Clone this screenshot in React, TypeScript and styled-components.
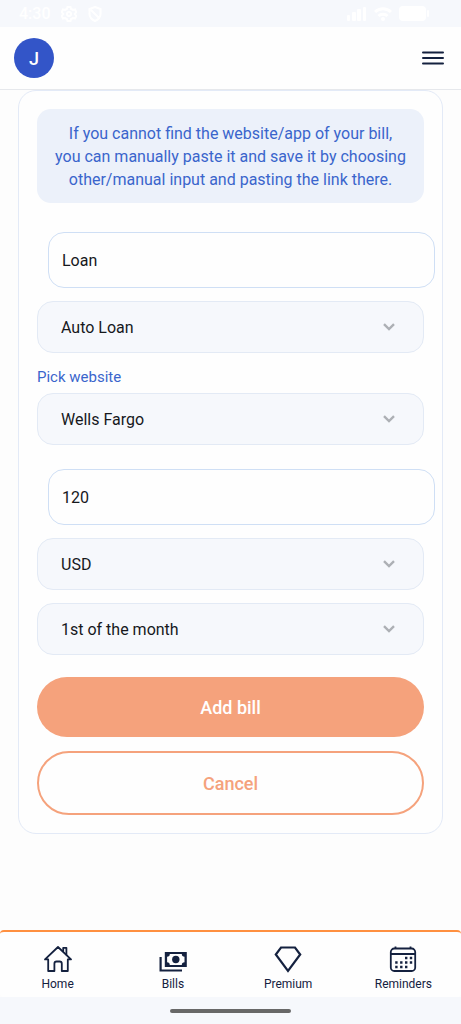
import React from "react";
import styled, { createGlobalStyle } from "styled-components";

const navy = "#14213f";
const blue = "#3a65cc";
const coral = "#f5a27c";

const GlobalStyle = createGlobalStyle`
  * { box-sizing: border-box; }
  body {
    margin: 0;
    background: #fdfdfd;
    font-family: Roboto, "Liberation Sans", sans-serif;
    color: #16181c;
  }
  button, input, select { font: inherit; color: inherit; }
`;

const Page = styled.div`
  min-height: 100vh;
  display: flex;
  flex-direction: column;
`;

const StatusBar = styled.div`
  height: 27px;
  padding: 0 32px 0 19px;
  display: flex;
  align-items: center;
  justify-content: space-between;
  background: #f6f8fc;
  color: #fff;
  font-size: 16px;
  font-weight: 500;
`;

const StatusGroup = styled.div<{ $gap: number }>`
  display: flex;
  align-items: center;
  gap: ${(p) => p.$gap}px;
`;

const Header = styled.header`
  height: 63px;
  padding: 0 17px 0 14px;
  display: flex;
  align-items: center;
  justify-content: space-between;
  background: #fefefe;
  border-bottom: 1px solid #e6e8ec;
`;

const Avatar = styled.button`
  width: 40px;
  height: 40px;
  padding: 0;
  border: 0;
  border-radius: 50%;
  background: #3355c8;
  color: #fff;
  font-size: 18px;
  font-weight: 500;
`;

const MenuButton = styled.button`
  padding: 0;
  border: 0;
  background: none;
  display: flex;
`;

const Main = styled.main`
  flex: 1;
  padding: 0 18px 24px;
`;

const Card = styled.form`
  display: flex;
  flex-direction: column;
  padding: 18px;
  border: 1px solid #e3eaf7;
  border-radius: 18px;
  background: #fefefe;
`;

const Notice = styled.p`
  margin: 0 0 29px;
  padding: 13px 12px 12px;
  border-radius: 14px;
  background: #ecf1fa;
  color: ${blue};
  font-size: 16px;
  line-height: 23px;
  text-align: center;
`;

const TextField = styled.input`
  height: 56px;
  margin: 0 -11px 13px 11px;
  padding: 0 13px;
  border: 1px solid #cfdff5;
  border-radius: 16px;
  background: #fefefe;
  font-size: 16px;
  outline: none;
`;

const SelectBox = styled.div<{ $after: number }>`
  position: relative;
  margin-bottom: ${(p) => p.$after}px;

  svg {
    position: absolute;
    right: 29px;
    top: 22px;
    pointer-events: none;
  }
`;

const Select = styled.select`
  display: block;
  width: 100%;
  height: 52px;
  padding: 0 56px 0 23px;
  appearance: none;
  border: 1px solid #e3eaf5;
  border-radius: 16px;
  background: #f6f8fc;
  font-size: 16px;
  outline: none;
`;

const FieldLabel = styled.label`
  padding: 1px 0 6px;
  color: ${blue};
  font-size: 15px;
  line-height: 20px;
`;

const ActionButton = styled.button<{ $outline?: boolean }>`
  height: ${(p) => (p.$outline ? 64 : 60)}px;
  border: ${(p) => (p.$outline ? `2px solid ${coral}` : "0")};
  border-radius: 32px;
  background: ${(p) => (p.$outline ? "#fefefe" : coral)};
  color: ${(p) => (p.$outline ? coral : "#fff")};
  font-size: 18px;
  font-weight: 500;

  & + & { margin-top: 14px; }
`;

const BottomNav = styled.nav`
  height: 67px;
  display: grid;
  grid-template-columns: repeat(4, 1fr);
  background: #fefefe;
  border-top: 2px solid #ff9040;
  border-radius: 4px;
`;

const NavLink = styled.a`
  display: flex;
  flex-direction: column;
  align-items: center;
  padding-top: 13px;
  gap: 3px;
  color: ${navy};
  font-size: 12px;
  line-height: 16px;
  text-decoration: none;
`;

const GestureArea = styled.div`
  height: 27px;
  display: flex;
  align-items: center;
  justify-content: center;
  background: #f6f8fc;
`;

const GestureHandle = styled.div`
  width: 121px;
  height: 4px;
  border-radius: 2px;
  background: #686868;
`;

function SelectField({ id, label, value, after = 13 }: { id: string; label?: string; value: string; after?: number }) {
  return (
    <SelectBox $after={after}>
      <Select id={id} aria-label={label} defaultValue={value}>
        <option>{value}</option>
      </Select>
      <svg width="12" height="8" viewBox="0 0 12 8" fill="none" stroke="#adb0b5" strokeWidth="2.4" aria-hidden="true">
        <path d="M1 1.200l5 4.800 5-4.800" />
      </svg>
    </SelectBox>
  );
}

const HomeIcon = () => (
  <svg width="28" height="28" viewBox="0 0 28 28" fill="none" stroke={navy} strokeWidth="1.800" strokeLinejoin="round" strokeLinecap="round" aria-hidden="true">
    <path d="M1 14.400L14 2l13 12.400h-3.200V26h-6v-7.200c0-1.500-.8-2.300-2.200-2.300h-3c-1.400 0-2.200.8-2.200 2.300V26H4.200V14.400z" />
    <path d="M19.200 6.200V2.800h3.200v6.800" />
  </svg>
);

const BillsIcon = () => (
  <svg width="28" height="28" viewBox="0 0 28 28" aria-hidden="true">
    <path d="M1.600 12v13.500h21.400" fill="none" stroke={navy} strokeWidth="2.200" />
    <path d="M5.800 7h22v15h-22z" fill={navy} />
    <path d="M10.800 9h12c0 1.700 1 2.700 2.700 2.700v5.500c-1.700 0-2.700 1-2.700 2.700h-12c0-1.700-1-2.700-2.700-2.700v-5.500c1.700 0 2.700-1 2.700-2.700z" fill="#fefefe" />
    <circle cx="16.800" cy="14.500" r="3.700" fill={navy} />
  </svg>
);

const PremiumIcon = () => (
  <svg width="28" height="28" viewBox="0 0 28 28" fill="none" stroke={navy} strokeWidth="2.200" aria-hidden="true">
    <path d="M7 2.500h14l5.200 7L14 25.800 1.800 9.500z" />
  </svg>
);

const RemindersIcon = () => (
  <svg width="28" height="28" viewBox="0 0 28 28" fill="none" stroke={navy} strokeWidth="1.800" aria-hidden="true">
    <rect x="1.800" y="3.500" width="24.400" height="22.500" rx="3.500" />
    <path d="M2 9h24M6.500 1.500v2M21.500 1.500v2" />
    <path d="M16 13h2.400M20.800 13h2.400M6.200 17.500h2.400M11.100 17.500h2.400M16 17.500h2.400M20.800 17.500h2.400M6.200 22h2.400M11.100 22h2.400M16 22h2.400" strokeWidth="2.400" />
  </svg>
);

const navItems = [
  { name: "Home", Icon: HomeIcon },
  { name: "Bills", Icon: BillsIcon },
  { name: "Premium", Icon: PremiumIcon },
  { name: "Reminders", Icon: RemindersIcon },
];

export default function App() {
  return (
    <Page>
      <GlobalStyle />
      <StatusBar>
        <StatusGroup $gap={10}>
          <span>4:30</span>
          <svg width="16" height="16" viewBox="0 0 16 16" fill="none" stroke="#fff" strokeWidth="2" aria-hidden="true">
            <path d="M6.500 1h3l.6 2 1.900 1 2-.5 1.300 2.600L13.800 8l1.500 1.900-1.300 2.600-2-.5-1.900 1-.6 2h-3l-.6-2-1.900-1-2 .5L.7 9.900 2.200 8 .7 6.100 2 3.500l2 .5 1.900-1z" />
            <circle cx="8" cy="8" r="2" />
          </svg>
          <svg width="16" height="16" viewBox="0 0 16 16" fill="none" stroke="#fff" strokeWidth="2" aria-hidden="true">
            <path d="M8 1l5.500 2v5c0 3-2.200 5.500-5.500 7-3.300-1.500-5.500-4-5.500-7V3zM4 4l8 8" />
          </svg>
        </StatusGroup>
        <StatusGroup $gap={7}>
          <svg width="20" height="14" viewBox="0 0 20 14" fill="#fff" aria-hidden="true">
            <rect x="0" y="8" width="3" height="6" rx="1" />
            <rect x="5" y="5" width="4" height="9" rx="1" />
            <rect x="10" y="2" width="4" height="12" rx="1" />
            <rect x="16" y="0" width="3" height="14" rx="1" />
          </svg>
          <svg width="18" height="14" viewBox="0 0 18 14" fill="none" stroke="#fff" strokeWidth="3" aria-hidden="true">
            <path d="M1 5c4.500-4.500 11.500-4.500 16 0M4.500 9c2.500-2.500 6.500-2.500 9 0" />
            <circle cx="9" cy="12" r="2" fill="#fff" stroke="none" />
          </svg>
          <svg width="30" height="15" viewBox="0 0 30 15" fill="#fff" aria-hidden="true">
            <rect width="27" height="15" rx="4" />
            <rect x="28" y="4" width="2" height="7" rx="1" />
          </svg>
        </StatusGroup>
      </StatusBar>

      <Header>
        <Avatar type="button">J</Avatar>
        <MenuButton type="button" aria-label="Menu">
          <svg width="22" height="16" viewBox="0 0 22 16" stroke={navy} strokeWidth="2" strokeLinecap="round" aria-hidden="true">
            <path d="M1 2.500h20M1 8h20M1 13.500h20" />
          </svg>
        </MenuButton>
      </Header>

      <Main>
        <Card onSubmit={(e) => e.preventDefault()}>
          <Notice>
            If you cannot find the website/app of your bill,
            <br />
            you can manually paste it and save it by choosing
            <br />
            other/manual input and pasting the link there.
          </Notice>
          <TextField aria-label="Bill name" defaultValue="Loan" />
          <SelectField id="category" label="Bill category" value="Auto Loan" />
          <FieldLabel htmlFor="website">Pick website</FieldLabel>
          <SelectField id="website" value="Wells Fargo" after={24} />
          <TextField aria-label="Amount" inputMode="decimal" defaultValue="120" />
          <SelectField id="currency" label="Currency" value="USD" />
          <SelectField id="due" label="Due day" value="1st of the month" after={22} />
          <ActionButton type="submit">Add bill</ActionButton>
          <ActionButton type="button" $outline>Cancel</ActionButton>
        </Card>
      </Main>

      <BottomNav>
        {navItems.map(({ name, Icon }) => (
          <NavLink key={name} href={`#${name.toLowerCase()}`}>
            <Icon />
            {name}
          </NavLink>
        ))}
      </BottomNav>
      <GestureArea>
        <GestureHandle />
      </GestureArea>
    </Page>
  );
}
